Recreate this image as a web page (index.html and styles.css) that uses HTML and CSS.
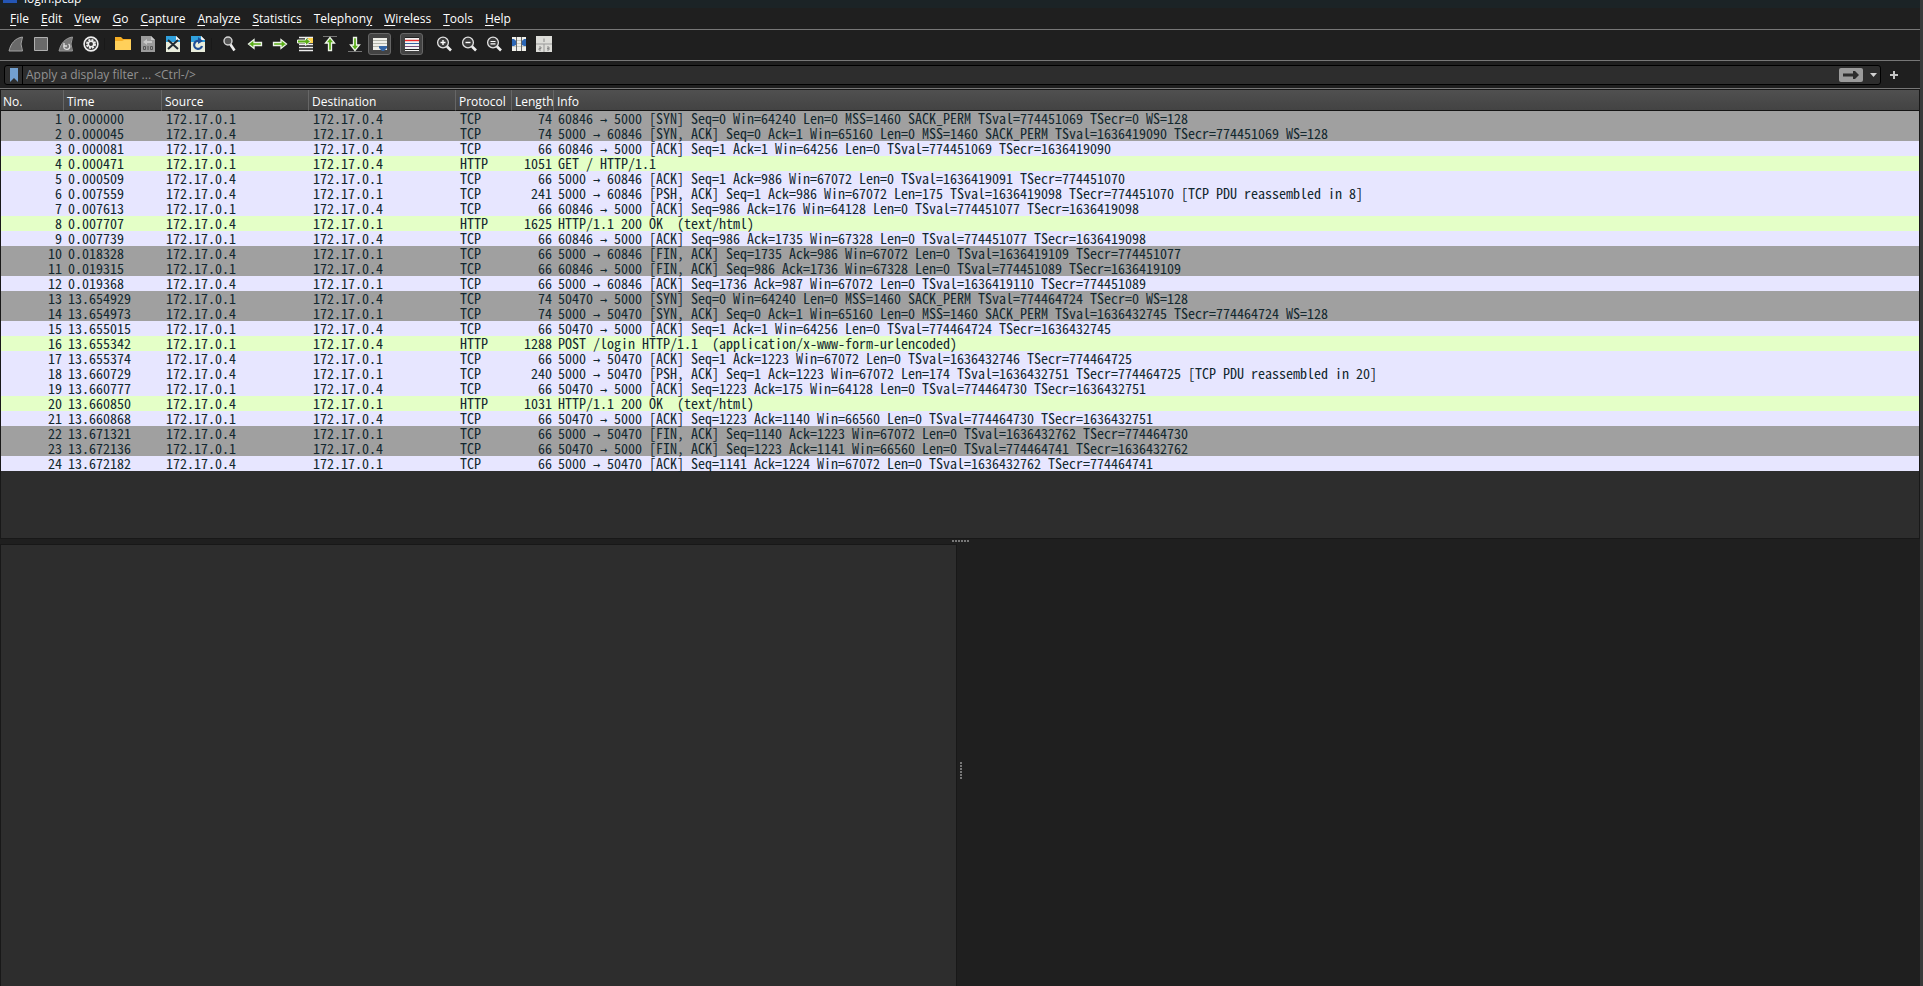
FILE: index.html
```
<!DOCTYPE html>
<html lang="en">
<head>
<meta charset="utf-8">
<title>login.pcap</title>
<link rel="stylesheet" href="styles.css">
</head>
<body>
<div class="app">
<header class="titlebar"><svg class="appicon" width="16" height="16" viewBox="0 0 16 16"><path d="M1 1h14v14H1z" fill="#2456b5"/><path d="M3 12C5 8 8 5 12 4q-1 5 1 8z" fill="#e8eef8"/></svg><span>login.pcap</span></header>
<nav class="menubar">
<button><u>F</u>ile</button><button><u>E</u>dit</button><button><u>V</u>iew</button><button><u>G</u>o</button><button><u>C</u>apture</button><button><u>A</u>nalyze</button><button><u>S</u>tatistics</button><button>Telephon<u>y</u></button><button><u>W</u>ireless</button><button><u>T</u>ools</button><button><u>H</u>elp</button>
</nav>
<div class="toolbar" role="toolbar" aria-label="Main toolbar">
<button aria-label="Start capture"><svg viewBox="0 0 16 16"><path d="M1 15C2.500 8 7 2 14.500 1Q11.500 8 14.500 15z" fill="#696969" stroke="#a3a3a3"/></svg></button>
<button aria-label="Stop capture"><svg viewBox="0 0 16 16"><path d="M1.500 1.500h13v13h-13z" fill="#696969" stroke="#b0b0b0"/></svg></button>
<button aria-label="Restart capture"><svg viewBox="0 0 16 16"><path d="M1 15C2.500 8 7 2 14.500 1Q11.500 8 14.500 15z" fill="#777" stroke="#999"/><path d="M6.500 8.500a3 3 0 1 0 4-.5M6 7v3h3" fill="none" stroke="#ddd" stroke-width="1.300"/></svg></button>
<button aria-label="Capture options"><svg viewBox="0 0 16 16"><circle cx="8" cy="8" r="6.900" fill="#333" stroke="#eee" stroke-width="1.600"/><circle cx="8" cy="8" r="4" fill="none" stroke="#eee" stroke-width="2" stroke-dasharray="2 1.140"/><circle cx="8" cy="8" r="2.700" fill="none" stroke="#eee" stroke-width="1.500"/></svg></button>
<i class="sep"></i>
<button aria-label="Open"><svg viewBox="0 0 16 16"><path d="M0 1h6l2 2h8v11H0z" fill="#f5ad24"/><path d="M0 5h7l2-1h7v10H0z" fill="#ffd05a"/></svg></button>
<button aria-label="Save"><svg viewBox="0 0 16 16"><path d="M1 0h10l4 4v12H1z" fill="#9b9b9b"/><path d="M11 0v4h4z" fill="#c8c8c8"/><path d="M3 6l4-3v2h5v2H7v2z" fill="#c8c8c8"/><path d="M3.500 10.500h2v3h-2zM8 10v4M10.500 10.500h2v3h-2z" fill="none" stroke="#555"/></svg></button>
<button aria-label="Close"><svg viewBox="0 0 16 16"><path d="M1 0h10l4 4v12H1z" fill="#e9eddc"/><path d="M1 0h10v4h4v2H1z" fill="#30a0dc"/><path d="M11 0v4h4z" fill="#f4f4f4"/><path d="M3 4l10 9M13 4L3 13" stroke="#222c32" stroke-width="2"/></svg></button>
<button aria-label="Reload"><svg viewBox="0 0 16 16"><path d="M1 0h10l4 4v12H1z" fill="#e9eddc"/><path d="M1 0h10v4h4v2H1z" fill="#30a0dc"/><path d="M11 0v4h4z" fill="#f4f4f4"/><path d="M12 10a4 4 0 1 1-3-5" fill="none" stroke="#1f4f98" stroke-width="2.200"/><path d="M8 1l5 4-5 3z" fill="#1f4f98"/></svg></button>
<i class="sep"></i>
<button aria-label="Find"><svg viewBox="0 0 16 16"><circle cx="6" cy="5" r="4" fill="#555" stroke="#d5d5d5" stroke-width="1.400"/><path d="M8.500 8.500l4 6" stroke="#eee" stroke-width="2.600"/></svg></button>
<button aria-label="Previous packet"><svg viewBox="0 0 16 16"><path d="M1.500 8L7 3.500v3h7.500v3H7v3z" fill="#58ad16" stroke="#edf3e8" stroke-width="1.300"/></svg></button>
<button aria-label="Next packet"><svg viewBox="0 0 16 16"><path d="M14.500 8L9 3.500v3H1.500v3H9v3z" fill="#58ad16" stroke="#edf3e8" stroke-width="1.300"/></svg></button>
<button aria-label="Go to packet"><svg viewBox="0 0 16 16"><path d="M2 1.500h14M2 8.500h14M2 11.500h14M2 14.500h14" stroke="#eee" stroke-width="1.400"/><path d="M11 2h5v5h-5z" fill="#ffd34a"/><path d="M13.500 5.500L8.500 1.500v2.500H.5v3h8v2.500z" fill="#58ad16" stroke="#edf3e8"/></svg></button>
<button aria-label="First packet"><svg viewBox="0 0 16 16"><path d="M1 .5h14" stroke="#777"/><path d="M8 1.500L3.500 7h3v7.500h3V7h3z" fill="#58ad16" stroke="#edf3e8" stroke-width="1.300"/></svg></button>
<button aria-label="Last packet"><svg viewBox="0 0 16 16"><path d="M1 15.500h14" stroke="#777"/><path d="M8 14.500L3.500 9h3V1.500h3V9h3z" fill="#58ad16" stroke="#edf3e8" stroke-width="1.300"/></svg></button>
<button class="on" aria-label="Auto scroll"><svg viewBox="0 0 16 16"><path d="M1 2h14v12H1z" fill="#efefe9"/><path d="M1 4.500h14M1 7.500h14M1 10.500h14" stroke="#b3b5ab"/><path d="M7 10h8v2l-3 3h-2l-3-3z" fill="#3465a4"/></svg></button>
<i class="sep"></i>
<button class="on" aria-label="Colorize"><svg viewBox="0 0 16 16"><path d="M1 1h14v14H1z" fill="#f3f3f3"/><path d="M1 4.500h14" stroke="#ef2929" stroke-width="1.400"/><path d="M1 7.500h14" stroke="#3465a4"/><path d="M1 10.500h14" stroke="#75507b"/><path d="M1 1.500h14M1 13.500h14" stroke="#222"/></svg></button>
<i class="sep"></i>
<button aria-label="Zoom in"><svg viewBox="0 0 16 16"><circle cx="7" cy="6.500" r="5.400" fill="#3b3b3b" stroke="#e2e2e2" stroke-width="1.300"/><path d="M4.500 6.500h5M7 4v5" stroke="#fff" stroke-width="1.400"/><path d="M11 10.500l4 4" stroke="#eee" stroke-width="2.600"/></svg></button>
<button aria-label="Zoom out"><svg viewBox="0 0 16 16"><circle cx="7" cy="6.500" r="5.400" fill="#3b3b3b" stroke="#e2e2e2" stroke-width="1.300"/><path d="M4.500 6.500h5" stroke="#fff" stroke-width="1.400"/><path d="M11 10.500l4 4" stroke="#eee" stroke-width="2.600"/></svg></button>
<button aria-label="Normal size"><svg viewBox="0 0 16 16"><circle cx="7" cy="6.500" r="5.400" fill="#3b3b3b" stroke="#e2e2e2" stroke-width="1.300"/><path d="M4.500 5.500h5M4.500 7.800h5" stroke="#fff" stroke-width="1.200"/><path d="M11 10.500l4 4" stroke="#eee" stroke-width="2.600"/></svg></button>
<button aria-label="Resize columns"><svg viewBox="0 0 16 16"><path d="M1 1h14v14H1z" fill="#efefe9"/><path d="M1 4.500h14M1 7.500h14M1 10.500h14" stroke="#c9cbc1"/><path d="M5.500 1v14M10.500 1v14" stroke="#666"/><path d="M1 3h2l2 2v4l-2 1H1zM15 3h-2l-2 2v4l2 1h2z" fill="#2c67b5"/></svg></button>
<button aria-label="Reset layout"><svg viewBox="0 0 16 16"><path d="M0 0h16v16H0z" fill="#dcdcd8"/><path d="M0 8h16M8 8v8" stroke="#999"/><path d="M8 2.500v3.500M3 11h2v1.500H3V14h2M11 11h2v3h-2M11 12.500h2" stroke="#888" fill="none"/></svg></button>
</div>
<div class="filterbar">
<div class="filter">
<button class="bookmark" aria-label="Filter bookmarks"><svg width="8" height="14" viewBox="0 0 8 14"><path d="M0 0h8v14l-4-4-4 4z" fill="#729fcf"/></svg></button>
<input type="text" aria-label="Display filter" placeholder="Apply a display filter ... &lt;Ctrl-/&gt;">
<button class="apply" aria-label="Apply filter"><svg width="16" height="8" viewBox="0 0 16 8"><path d="M0 2.500h10V0h2l4 4-4 4h-2V5.500H0z" fill="#2d2d2d"/></svg></button>
<button class="drop" aria-label="Recent filters"><svg width="7" height="4" viewBox="0 0 7 4"><path d="M0 0h7L3.500 4z" fill="#d2d2d2"/></svg></button>
</div>
<button class="add" aria-label="Add filter button"><svg width="8" height="8" viewBox="0 0 8 8"><path d="M4 0v8M0 4h8" stroke="#c4c4c4" stroke-width="2"/></svg></button>
</div>
<main class="panes">
<section class="packets">
<table>
<colgroup><col class="c-no"><col class="c-time"><col class="c-addr"><col class="c-addr"><col class="c-proto"><col class="c-len"><col></colgroup>
<thead><tr><th>No.</th><th>Time</th><th>Source</th><th>Destination</th><th>Protocol</th><th>Length</th><th>Info</th></tr></thead>
<tbody>
<tr class="gray"><td>1</td><td>0.000000</td><td>172.17.0.1</td><td>172.17.0.4</td><td>TCP</td><td>74</td><td>60846 <b>→</b> 5000 [SYN] Seq=0 Win=64240 Len=0 MSS=1460 SACK_PERM TSval=774451069 TSecr=0 WS=128</td></tr>
<tr class="gray"><td>2</td><td>0.000045</td><td>172.17.0.4</td><td>172.17.0.1</td><td>TCP</td><td>74</td><td>5000 <b>→</b> 60846 [SYN, ACK] Seq=0 Ack=1 Win=65160 Len=0 MSS=1460 SACK_PERM TSval=1636419090 TSecr=774451069 WS=128</td></tr>
<tr><td>3</td><td>0.000081</td><td>172.17.0.1</td><td>172.17.0.4</td><td>TCP</td><td>66</td><td>60846 <b>→</b> 5000 [ACK] Seq=1 Ack=1 Win=64256 Len=0 TSval=774451069 TSecr=1636419090</td></tr>
<tr class="http"><td>4</td><td>0.000471</td><td>172.17.0.1</td><td>172.17.0.4</td><td>HTTP</td><td>1051</td><td>GET / HTTP/1.1</td></tr>
<tr><td>5</td><td>0.000509</td><td>172.17.0.4</td><td>172.17.0.1</td><td>TCP</td><td>66</td><td>5000 <b>→</b> 60846 [ACK] Seq=1 Ack=986 Win=67072 Len=0 TSval=1636419091 TSecr=774451070</td></tr>
<tr><td>6</td><td>0.007559</td><td>172.17.0.4</td><td>172.17.0.1</td><td>TCP</td><td>241</td><td>5000 <b>→</b> 60846 [PSH, ACK] Seq=1 Ack=986 Win=67072 Len=175 TSval=1636419098 TSecr=774451070 [TCP PDU reassembled in 8]</td></tr>
<tr><td>7</td><td>0.007613</td><td>172.17.0.1</td><td>172.17.0.4</td><td>TCP</td><td>66</td><td>60846 <b>→</b> 5000 [ACK] Seq=986 Ack=176 Win=64128 Len=0 TSval=774451077 TSecr=1636419098</td></tr>
<tr class="http"><td>8</td><td>0.007707</td><td>172.17.0.4</td><td>172.17.0.1</td><td>HTTP</td><td>1625</td><td>HTTP/1.1 200 OK  (text/html)</td></tr>
<tr><td>9</td><td>0.007739</td><td>172.17.0.1</td><td>172.17.0.4</td><td>TCP</td><td>66</td><td>60846 <b>→</b> 5000 [ACK] Seq=986 Ack=1735 Win=67328 Len=0 TSval=774451077 TSecr=1636419098</td></tr>
<tr class="gray"><td>10</td><td>0.018328</td><td>172.17.0.4</td><td>172.17.0.1</td><td>TCP</td><td>66</td><td>5000 <b>→</b> 60846 [FIN, ACK] Seq=1735 Ack=986 Win=67072 Len=0 TSval=1636419109 TSecr=774451077</td></tr>
<tr class="gray"><td>11</td><td>0.019315</td><td>172.17.0.1</td><td>172.17.0.4</td><td>TCP</td><td>66</td><td>60846 <b>→</b> 5000 [FIN, ACK] Seq=986 Ack=1736 Win=67328 Len=0 TSval=774451089 TSecr=1636419109</td></tr>
<tr><td>12</td><td>0.019368</td><td>172.17.0.4</td><td>172.17.0.1</td><td>TCP</td><td>66</td><td>5000 <b>→</b> 60846 [ACK] Seq=1736 Ack=987 Win=67072 Len=0 TSval=1636419110 TSecr=774451089</td></tr>
<tr class="gray"><td>13</td><td>13.654929</td><td>172.17.0.1</td><td>172.17.0.4</td><td>TCP</td><td>74</td><td>50470 <b>→</b> 5000 [SYN] Seq=0 Win=64240 Len=0 MSS=1460 SACK_PERM TSval=774464724 TSecr=0 WS=128</td></tr>
<tr class="gray"><td>14</td><td>13.654973</td><td>172.17.0.4</td><td>172.17.0.1</td><td>TCP</td><td>74</td><td>5000 <b>→</b> 50470 [SYN, ACK] Seq=0 Ack=1 Win=65160 Len=0 MSS=1460 SACK_PERM TSval=1636432745 TSecr=774464724 WS=128</td></tr>
<tr><td>15</td><td>13.655015</td><td>172.17.0.1</td><td>172.17.0.4</td><td>TCP</td><td>66</td><td>50470 <b>→</b> 5000 [ACK] Seq=1 Ack=1 Win=64256 Len=0 TSval=774464724 TSecr=1636432745</td></tr>
<tr class="http"><td>16</td><td>13.655342</td><td>172.17.0.1</td><td>172.17.0.4</td><td>HTTP</td><td>1288</td><td>POST /login HTTP/1.1  (application/x-www-form-urlencoded)</td></tr>
<tr><td>17</td><td>13.655374</td><td>172.17.0.4</td><td>172.17.0.1</td><td>TCP</td><td>66</td><td>5000 <b>→</b> 50470 [ACK] Seq=1 Ack=1223 Win=67072 Len=0 TSval=1636432746 TSecr=774464725</td></tr>
<tr><td>18</td><td>13.660729</td><td>172.17.0.4</td><td>172.17.0.1</td><td>TCP</td><td>240</td><td>5000 <b>→</b> 50470 [PSH, ACK] Seq=1 Ack=1223 Win=67072 Len=174 TSval=1636432751 TSecr=774464725 [TCP PDU reassembled in 20]</td></tr>
<tr><td>19</td><td>13.660777</td><td>172.17.0.1</td><td>172.17.0.4</td><td>TCP</td><td>66</td><td>50470 <b>→</b> 5000 [ACK] Seq=1223 Ack=175 Win=64128 Len=0 TSval=774464730 TSecr=1636432751</td></tr>
<tr class="http"><td>20</td><td>13.660850</td><td>172.17.0.4</td><td>172.17.0.1</td><td>HTTP</td><td>1031</td><td>HTTP/1.1 200 OK  (text/html)</td></tr>
<tr><td>21</td><td>13.660868</td><td>172.17.0.1</td><td>172.17.0.4</td><td>TCP</td><td>66</td><td>50470 <b>→</b> 5000 [ACK] Seq=1223 Ack=1140 Win=66560 Len=0 TSval=774464730 TSecr=1636432751</td></tr>
<tr class="gray"><td>22</td><td>13.671321</td><td>172.17.0.4</td><td>172.17.0.1</td><td>TCP</td><td>66</td><td>5000 <b>→</b> 50470 [FIN, ACK] Seq=1140 Ack=1223 Win=67072 Len=0 TSval=1636432762 TSecr=774464730</td></tr>
<tr class="gray"><td>23</td><td>13.672136</td><td>172.17.0.1</td><td>172.17.0.4</td><td>TCP</td><td>66</td><td>50470 <b>→</b> 5000 [FIN, ACK] Seq=1223 Ack=1141 Win=66560 Len=0 TSval=774464741 TSecr=1636432762</td></tr>
<tr><td>24</td><td>13.672182</td><td>172.17.0.4</td><td>172.17.0.1</td><td>TCP</td><td>66</td><td>5000 <b>→</b> 50470 [ACK] Seq=1141 Ack=1224 Win=67072 Len=0 TSval=1636432762 TSecr=774464741</td></tr>
</tbody>
</table>
</section>
<div class="split-h"><i></i><i></i><i></i><i></i><i></i><i></i></div>
<section class="lower">
<div class="details"></div>
<div class="split-v"><i></i><i></i><i></i><i></i><i></i><i></i></div>
<div class="bytes"></div>
</section>
</main>
</div>
</body>
</html>
```
FILE: styles.css
```
* { box-sizing: border-box; }
body {
  margin: 0;
  background: #3a3a3a;
  color: #fff;
  font: 12px/16px "Open Sans", "Noto Sans", sans-serif;
}
button {
  display: flex;
  align-items: center;
  justify-content: center;
  padding: 0;
  border: 0;
  background: none;
  color: inherit;
  font: inherit;
}
.app {
  display: flex;
  flex-direction: column;
  height: 100vh;
  margin-right: 3px;
  background: #1f1f1f;
}
.titlebar {
  display: flex;
  align-items: flex-end;
  gap: 6px;
  height: 8px;
  padding: 0 2px 1px;
  flex: none;
  overflow: hidden;
  background: #1b2326;
}
.appicon { flex: none; margin-bottom: 3px; }
.menubar {
  display: flex;
  flex: none;
  height: 22px;
  padding-left: 4px;
  border-bottom: 1px solid #777;
}
.menubar button { padding: 0 6px; }
.menubar u { text-underline-offset: 2px; }
.toolbar {
  display: flex;
  align-items: center;
  gap: 2px;
  flex: none;
  height: 31px;
  padding: 0 0 2px 4px;
  border-bottom: 1px solid #777;
}
.toolbar button {
  width: 23px;
  height: 22px;
  border: 1px solid transparent;
  border-radius: 3px;
}
.toolbar .on { border-color: #666; background: #434343; }
.toolbar svg { width: 16px; height: 16px; flex: none; }
.sep { width: 5px; height: 12px; border-left: 1px solid #191919; }
.filterbar {
  display: flex;
  align-items: center;
  flex: none;
  height: 28px;
  padding: 0 21px 0 4px;
  border-bottom: 1px solid #777;
}
.filter {
  display: flex;
  flex: 1;
  align-items: center;
  height: 20px;
  border: 1px solid #000;
  border-radius: 3px;
  background: #2d2d2d;
}
.bookmark {
  width: 18px;
  height: 18px;
  border-right: 1px solid #000;
}
.filter input {
  flex: 1;
  min-width: 0;
  height: 18px;
  padding: 0 3px;
  border: 0;
  outline: 0;
  background: none;
  color: #fff;
  font: inherit;
}
.filter input::placeholder { color: #929292; opacity: 1; }
.apply {
  width: 24px;
  height: 14px;
  border-radius: 2px;
  background: #9b9b9b;
}
.drop { width: 17px; height: 18px; padding-left: 4px; }
.add { width: 18px; height: 20px; padding-left: 8px; }
.panes { display: flex; flex: 1; flex-direction: column; min-height: 0; }
.packets {
  flex: 449;
  min-height: 0;
  overflow: hidden;
  border: 1px solid #181818;
  background: #2d2d2d;
}
table { width: 100%; border-spacing: 0; table-layout: fixed; }
.c-no { width: 63px; }
.c-time { width: 98px; }
.c-addr { width: 147px; }
.c-proto { width: 56px; }
.c-len { width: 42px; }
th {
  height: 21px;
  padding: 3px 0 0 3px;
  border-bottom: 1px solid #151515;
  border-right: 1px solid #666;
  background: linear-gradient(#505050, #434343);
  font-weight: 400;
  text-align: left;
  white-space: nowrap;
}
th:first-child { padding-left: 2px; }
th:last-child { border-right: 0; }
tbody tr { background: #e7e6ff; }
td {
  height: 15px;
  padding: 0 4px;
  color: #12272e;
  font: 14px/15px "Noto Sans Mono CJK SC", "Liberation Mono", monospace;
  white-space: pre;
}
td:nth-child(1), td:nth-child(6) { padding: 0 2px 0 0; text-align: right; }
td b {
  display: inline-block;
  width: 7px;
  font: 12px/12px "DejaVu Sans Mono", monospace;
}
tbody .gray { background: #a0a0a0; }
tbody .http { background: #e4ffc7; }
.split-h, .split-v { display: flex; justify-content: center; gap: 1px; flex: none; }
.split-h { align-items: flex-start; height: 5px; padding-top: 1px; }
.split-v { align-items: center; width: 8px; padding-top: 10px; flex-direction: column; }
.split-h i, .split-v i { width: 2px; height: 2px; background: #777; }
.lower { display: flex; flex: 443; min-height: 0; }
.details { flex: 1; border: 1px solid #181818; border-bottom: 0; background: #2d2d2d; }
.bytes { flex: 1; }
```
